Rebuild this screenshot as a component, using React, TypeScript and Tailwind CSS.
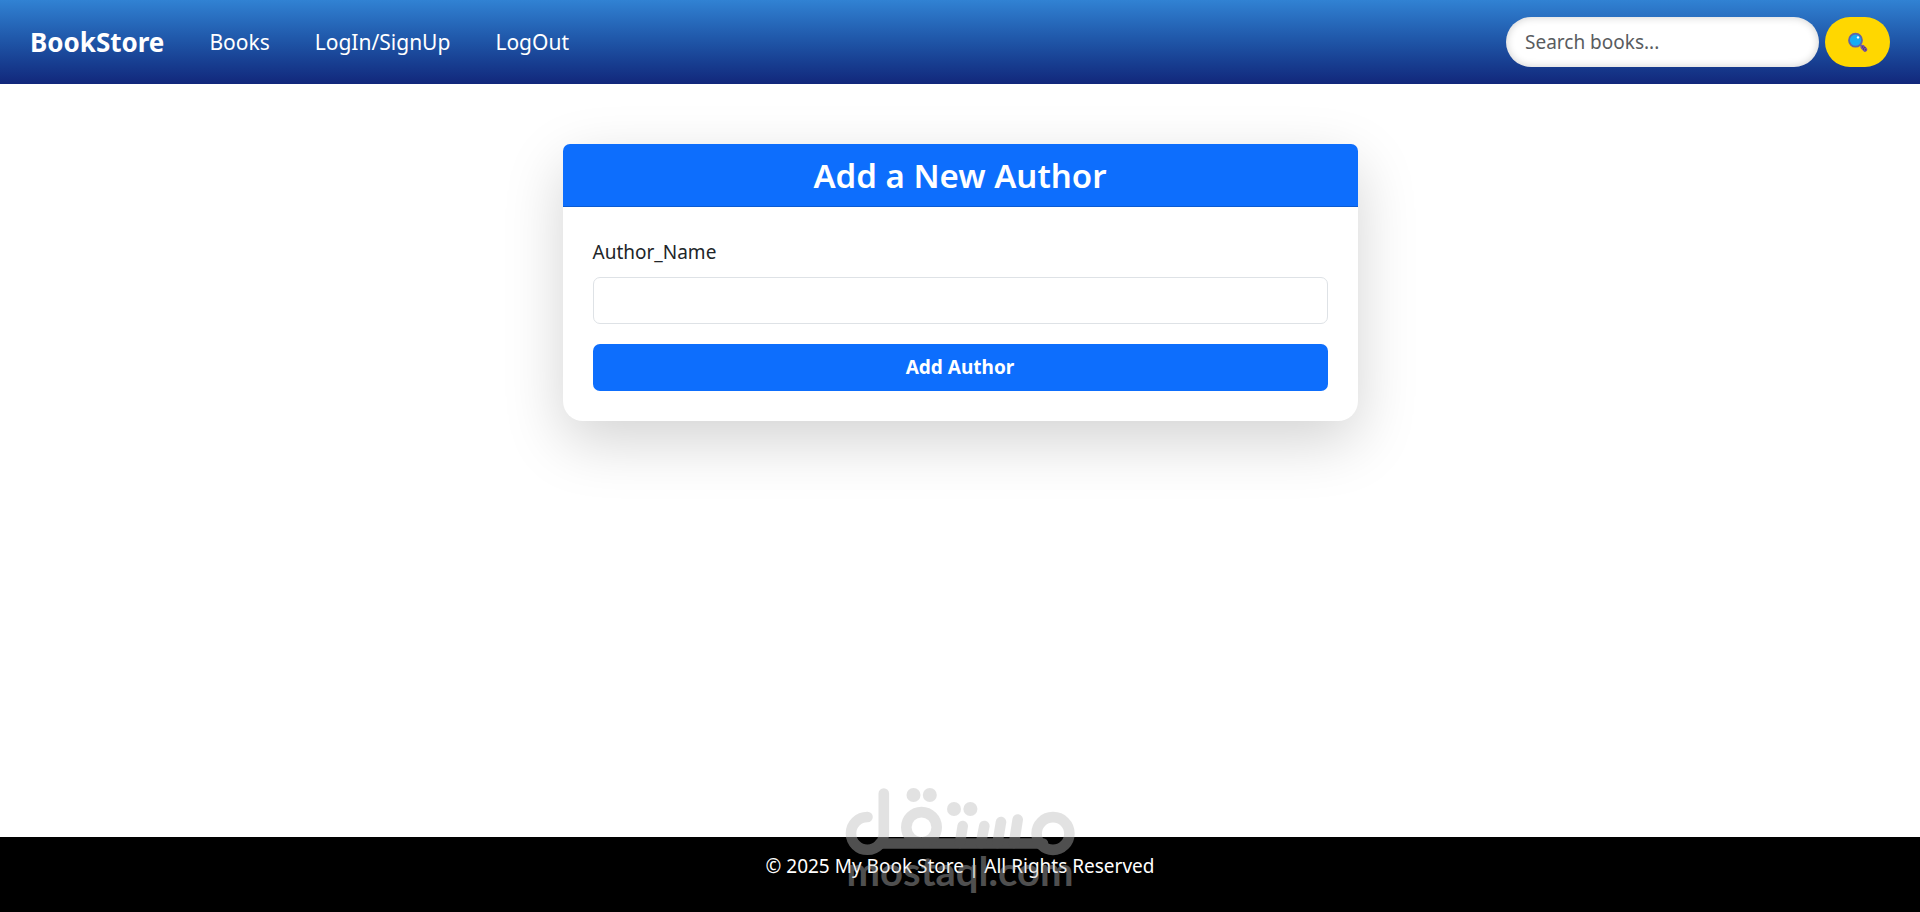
import type { FormEvent } from "react";

const navLinks = ["Books", "LogIn/SignUp", "LogOut"];

const SearchIcon = () => (
  <svg viewBox="0 0 20 20" className="size-5" aria-hidden="true">
    <path d="M12.5 13l2 2" stroke="#6264a7" strokeWidth="2" />
    <path d="M14.8 15.2l2.2 2.4" stroke="#7a559c" strokeWidth="4.4" strokeLinecap="round" />
    <circle cx="7.5" cy="8.2" r="6.5" fill="#16adf5" stroke="#6264a7" strokeWidth="1.8" />
    <circle cx="10" cy="5.4" r="1.2" fill="#fff" />
    <path
      d="M14.2 15h1M16.4 15.6h1M15 17h1M17.2 17.8h1"
      stroke="#3a2a5e"
      strokeWidth="1"
    />
  </svg>
);

const Header = () => (
  <header className="flex h-[84px] items-center justify-between bg-linear-to-b from-[#3182d3] to-[#12277b] px-[30px]">
    <nav className="flex items-center gap-[45px] text-[21px]/[30px] text-white">
      <a href="#" className="text-[26px]/[30px] font-bold">
        BookStore
      </a>
      {navLinks.map((link) => (
        <a key={link} href="#">
          {link}
        </a>
      ))}
    </nav>

    <form
      className="flex items-center gap-1.5"
      onSubmit={(e: FormEvent) => e.preventDefault()}
    >
      <input
        type="search"
        aria-label="Search books"
        placeholder="Search books..."
        className="h-[50px] w-[313px] rounded-full bg-white px-[19px] text-[19px] text-[#212529] placeholder-[#595c5f] shadow-[inset_0_0_8px_rgba(0,0,0,0.2)] outline-none"
      />
      <button
        type="submit"
        aria-label="Search"
        className="flex h-[50px] w-[65px] items-center justify-center rounded-[25px] bg-[#ffd700]"
      >
        <SearchIcon />
      </button>
    </form>
  </header>
);

const AuthorForm = () => (
  <section className="w-full max-w-[795px] rounded-[20px] bg-white shadow-[0_20px_60px_rgba(0,0,0,0.175)]">
    <h1 className="rounded-t-[7px] border-b border-[#0b5bd1] bg-[#0d6efd] pt-[11px] pb-[9px] text-center text-[33px]/[42px] font-semibold text-white">
      Add a New Author
    </h1>
    <form
      className="flex flex-col p-[30px]"
      onSubmit={(e: FormEvent) => e.preventDefault()}
    >
      <label htmlFor="author" className="mb-2.5 text-[19px]/[30px] text-[#212529]">
        Author_Name
      </label>
      <input
        id="author"
        type="text"
        className="mb-5 h-[47px] rounded-[7px] border border-[#dee2e6] px-4 text-[19px] outline-none"
      />
      <button
        type="submit"
        className="h-[47px] rounded-[7px] bg-[#0d6efd] text-[19px] font-bold text-white"
      >
        Add Author
      </button>
    </form>
  </section>
);

const Watermark = () => (
  <div
    className="pointer-events-none absolute bottom-4 left-1/2 w-[230px] -translate-x-1/2 font-['Lato',sans-serif] opacity-[0.42]"
    aria-hidden="true"
  >
    <svg viewBox="0 0 230 108" className="w-full overflow-visible">
      <g
        fill="none"
        stroke="#bcbcbc"
        strokeWidth="10.6"
        strokeLinecap="round"
        strokeLinejoin="round"
      >
        <path d="M22.5 29A16.4 16.4 0 1 0 38.8 45V5.5" />
        <path d="M35 55.5H198" />
        <circle cx="76.5" cy="39.3" r="15.2" />
        <circle cx="208" cy="45.5" r="16.4" />
        <path d="M117.7 38L115 55M139.3 38L136 55M156 34L152.5 55M172.7 31.5L169 55" />
      </g>
      <g fill="#bcbcbc">
        <circle cx="68.5" cy="7" r="7" />
        <circle cx="84.8" cy="7" r="7" />
        <circle cx="109" cy="21" r="7" />
        <circle cx="125.4" cy="21" r="7" />
        <text x="115" y="98" textAnchor="middle" fontSize="40" fontWeight="700">
          mostaql.com
        </text>
      </g>
    </svg>
  </div>
);

const Footer = () => (
  <footer className="relative h-[75px] bg-black pt-[14px] text-center text-[19px]/[30px] text-white">
    <p>© 2025 My Book Store | All Rights Reserved</p>
    <Watermark />
  </footer>
);

const App = () => (
  <div className="flex min-h-screen flex-col bg-white font-['Noto_Sans',sans-serif]">
    <Header />
    <main className="flex flex-1 items-start justify-center px-4 py-[60px]">
      <AuthorForm />
    </main>
    <Footer />
  </div>
);

export default App;
